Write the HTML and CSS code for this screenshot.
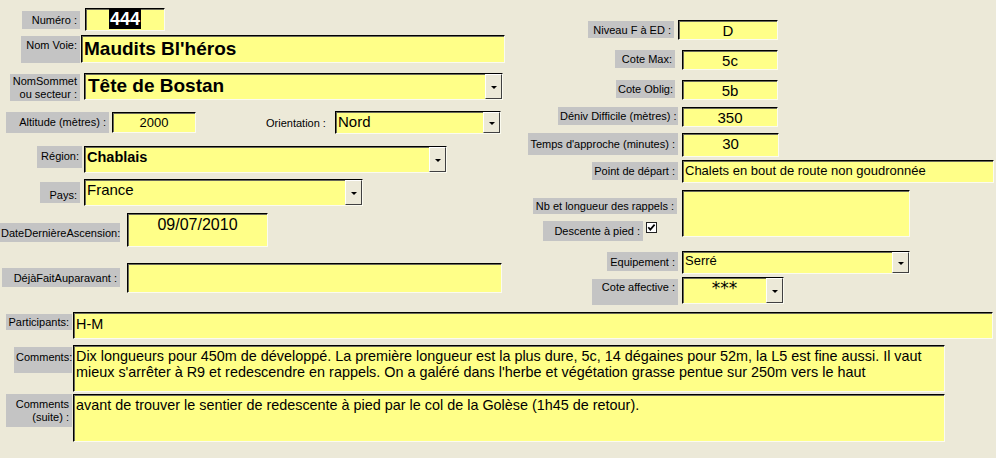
FILE: index.html
```html
<!DOCTYPE html>
<html lang="fr">
<head>
    <meta charset="UTF-8">
    <title>Voies - Formulaire</title>
    <link rel="stylesheet" href="styles.css">
</head>
<body>
    <div class="form">
        <div class="top">
            <div class="col-left">
                <div class="row r-numero">
                    <div class="lab">Numéro :</div>
                    <div class="field center"><span class="sel">444</span></div>
                </div>
                <div class="row r-voie">
                    <div class="lab">Nom Voie:</div>
                    <div class="field big">Maudits Bl'héros</div>
                </div>
                <div class="row r-sommet">
                    <div class="lab">NomSommet<br>ou secteur :</div>
                    <div class="field combo big"><span class="val">Tête de Bostan</span><span class="btn"></span></div>
                </div>
                <div class="row r-alt">
                    <div class="lab">Altitude (mètres) :</div>
                    <div class="field center">2000</div>
                    <div class="plain">Orientation :</div>
                    <div class="field combo"><span class="val">Nord</span><span class="btn"></span></div>
                </div>
                <div class="row r-region">
                    <div class="lab">Région:</div>
                    <div class="field combo"><span class="val">Chablais</span><span class="btn"></span></div>
                </div>
                <div class="row r-pays">
                    <div class="lab">Pays:</div>
                    <div class="field combo"><span class="val">France</span><span class="btn"></span></div>
                </div>
                <div class="row r-date">
                    <div class="lab">DateDernièreAscension:</div>
                    <div class="field center">09/07/2010</div>
                </div>
                <div class="row r-deja">
                    <div class="lab">DéjàFaitAuparavant :</div>
                    <div class="field"></div>
                </div>
            </div>

            <div class="col-right">
                <div class="row r-niveau">
                    <div class="rl"><div class="lab">Niveau F à ED :</div></div>
                    <div class="field center">D</div>
                </div>
                <div class="row r-max">
                    <div class="rl"><div class="lab">Cote Max:</div></div>
                    <div class="field center">5c</div>
                </div>
                <div class="row r-oblig">
                    <div class="rl"><div class="lab">Cote Oblig:</div></div>
                    <div class="field center">5b</div>
                </div>
                <div class="row r-deniv">
                    <div class="rl"><div class="lab">Déniv Difficile (mètres) :</div></div>
                    <div class="field center">350</div>
                </div>
                <div class="row r-temps">
                    <div class="rl"><div class="lab">Temps d'approche (minutes) :</div></div>
                    <div class="field center">30</div>
                </div>
                <div class="row r-depart">
                    <div class="rl"><div class="lab">Point de départ :</div></div>
                    <div class="field">Chalets en bout de route non goudronnée</div>
                </div>
                <div class="row r-rappels">
                    <div class="rl stack">
                        <div class="lab lab-nb">Nb et longueur des rappels :</div>
                        <div class="desc">
                            <div class="lab">Descente à pied :</div>
                            <svg class="chk" width="11" height="11" viewBox="0 0 11 11">
                                <rect x="0.5" y="0.5" width="10" height="10" fill="#fff" stroke="#222"/>
                                <path d="M2.3 5.2 L4.3 7.6 L8.6 2.6" fill="none" stroke="#000" stroke-width="1.7"/>
                            </svg>
                        </div>
                    </div>
                    <div class="field"></div>
                </div>
                <div class="row r-equip">
                    <div class="rl"><div class="lab">Equipement :</div></div>
                    <div class="field combo"><span class="val">Serré</span><span class="btn"></span></div>
                </div>
                <div class="row r-aff">
                    <div class="rl"><div class="lab">Cote affective :</div></div>
                    <div class="field combo"><span class="val stars">***</span><span class="btn"></span></div>
                </div>
            </div>
        </div>

        <div class="bottom">
            <div class="row r-part">
                <div class="lab">Participants:</div>
                <div class="field">H-M</div>
            </div>
            <div class="row r-comm">
                <div class="lab">Comments:</div>
                <div class="field memo">Dix longueurs pour 450m de développé. La première longueur est la plus dure, 5c, 14 dégaines pour 52m, la L5 est fine aussi. Il vaut mieux s'arrêter à R9 et redescendre en rappels. On a galéré dans l'herbe et végétation grasse pentue sur 250m vers le haut</div>
            </div>
            <div class="row r-suite">
                <div class="lab">Comments<br>(suite) :</div>
                <div class="field memo">avant de trouver le sentier de redescente à pied par le col de la Golèse (1h45 de retour).</div>
            </div>
        </div>
    </div>
</body>
</html>
```

FILE: styles.css
```css
body {
    margin: 0;
    width: 996px;
    height: 458px;
    overflow: hidden;
    background: #ece9d8;
    color: #000;
    font-family: "Liberation Sans", Arial, sans-serif;
}
.top {
    display: flex;
}
.col-left {
    width: 520px;
    padding-top: 8px;
}
.col-right {
    padding-top: 20px;
}
.row {
    display: flex;
    align-items: flex-start;
}
.lab {
    flex: none;
    box-sizing: border-box;
    background: #c4c4c4;
    font-size: 11px;
    line-height: 13px;
    text-align: right;
    white-space: nowrap;
    padding: 2px 3px 0 2px;
}
.plain {
    flex: none;
    font-size: 11px;
    line-height: 13px;
    white-space: nowrap;
}
.field {
    flex: none;
    box-sizing: border-box;
    background: #ffff88;
    border: 1px solid;
    border-color: #000 #fbfbf0 #fbfbf0 #000;
    box-shadow: inset 1px 1px 0 #6a6a5a;
    font-size: 13px;
    line-height: 15px;
    padding: 1px 2px;
    white-space: nowrap;
    overflow: hidden;
}
.center {
    text-align: center;
}
.big {
    font-size: 19px;
    font-weight: bold;
    line-height: 22px;
}
.memo {
    white-space: normal;
    font-size: 14.4px;
    line-height: 16px;
    padding-top: 2px;
}
.combo {
    display: flex;
    padding: 0;
}
.combo .val {
    flex: 1;
    padding: 1px 2px;
    overflow: hidden;
}
.combo .btn {
    flex: none;
    width: 17px;
    box-sizing: border-box;
    background: #ece9d8;
    border: 1px solid;
    border-color: #fff #404040 #404040 #fff;
    display: flex;
    align-items: center;
    justify-content: center;
}
.combo .btn::after {
    content: "";
    border-left: 3px solid transparent;
    border-right: 3px solid transparent;
    border-top: 3px solid #000;
    margin-top: 2px;
}
.sel {
    background: #000;
    color: #fff;
    font-size: 18px;
    font-weight: bold;
    line-height: 19px;
    padding: 0 1px;
}

/* colonne gauche */
.r-numero .lab { margin: 3px 0 0 22px; width: 58px; height: 18px; padding-top: 3px; }
.r-numero .field { margin-left: 5px; width: 80px; height: 23px; padding-top: 1px; }

.r-voie { margin-top: 4px; }
.r-voie .lab { margin: 1px 0 0 21px; width: 59px; height: 27px; padding-top: 3px; }
.r-voie .field { margin-left: 1px; width: 424px; height: 28px; padding-top: 2px; }

.r-sommet { margin-top: 10px; }
.r-sommet .lab { margin: 1px 0 0 10px; width: 70px; height: 27px; padding-top: 1px; }
.r-sommet .field { margin-left: 4px; width: 419px; height: 27px; }
.r-sommet .val { padding: 1px 3px; }

.r-alt { margin-top: 10px; }
.r-alt .lab { margin: 1px 0 0 6px; width: 103px; height: 21px; padding-top: 4px; }
.r-alt .center { margin: 1px 0 0 3px; width: 84px; height: 21px; padding-top: 2px; }
.r-alt .plain { margin: 6px 0 0 70px; width: 69px; }
.r-alt .combo { width: 166px; height: 23px; font-size: 15px; line-height: 17px; }

.r-region { margin-top: 12px; }
.r-region .lab { margin-left: 37px; width: 45px; height: 22px; padding-top: 4px; }
.r-region .field { margin-left: 2px; width: 363px; height: 27px; font-size: 14.5px; font-weight: bold; line-height: 17px; }
.r-region .val { padding-top: 2px; }

.r-pays { margin-top: 6px; }
.r-pays .lab { margin: 3px 0 0 40px; width: 40px; height: 21px; padding-top: 7px; }
.r-pays .field { margin-left: 4px; width: 279px; height: 27px; font-size: 15px; line-height: 17px; }

.r-date { margin-top: 7px; }
.r-date .lab { margin-top: 10px; width: 120px; height: 19px; padding: 4px 0 0 1px; }
.r-date .field { margin-left: 7px; width: 141px; height: 34px; font-size: 16px; line-height: 18px; padding-top: 2px; }

.r-deja { margin-top: 16px; }
.r-deja .lab { margin: 5px 0 0 2px; width: 118px; height: 19px; padding-top: 4px; }
.r-deja .field { margin-left: 7px; width: 375px; height: 30px; }

/* colonne droite */
.rl {
    flex: none;
    width: 158px;
    display: flex;
    justify-content: flex-end;
}
.col-right .field { margin-left: 4px; }
.col-right .center { font-size: 15px; line-height: 17px; }

.r-niveau .lab { margin: 1px 4px 0 0; width: 86px; height: 17px; padding-top: 3px; }
.r-niveau .field { margin-left: 0; width: 100px; height: 20px; }

.r-max { margin-top: 10px; }
.r-max .lab { margin-right: 3px; width: 60px; height: 18px; padding-top: 3px; }
.r-max .field { width: 96px; height: 20px; }

.r-oblig { margin-top: 10px; }
.r-oblig .lab { margin-right: 3px; width: 59px; height: 18px; padding-top: 3px; }
.r-oblig .field { width: 96px; height: 20px; }

.r-deniv { margin-top: 7px; }
.r-deniv .lab { width: 120px; height: 18px; padding-top: 3px; }
.r-deniv .field { width: 96px; height: 20px; }

.r-temps { margin-top: 6px; }
.r-temps .lab { width: 150px; height: 22px; padding-top: 5px; }
.r-temps .field { width: 97px; height: 24px; }

.r-depart { margin-top: 3px; }
.r-depart .lab { margin-top: 2px; width: 86px; height: 18px; padding-top: 3px; }
.r-depart .field { width: 312px; height: 23px; padding-top: 2px; }

.r-rappels { margin-top: 7px; }
.stack {
    flex-direction: column;
    align-items: flex-end;
}
.lab-nb { margin: 8px 1px 0 0; width: 144px; height: 16px; padding-top: 2px; }
.desc {
    display: flex;
    align-items: flex-start;
    margin: 7px 21px 0 0;
}
.desc .lab { width: 100px; height: 20px; padding-top: 4px; }
.chk { margin: 1px 0 0 3px; }
.r-rappels .field { width: 228px; height: 47px; }

.r-equip { margin-top: 10px; }
.r-equip .lab { margin-top: 1px; width: 71px; height: 19px; padding-top: 4px; }
.r-equip .field { width: 228px; height: 23px; }

.r-aff { margin-top: 3px; }
.r-aff .lab { margin-top: 2px; width: 86px; height: 26px; padding-top: 2px; }
.r-aff .field { width: 102px; height: 27px; }
.stars {
    text-align: center;
    font-family: "DejaVu Sans", sans-serif;
    font-size: 17px;
    line-height: 18px;
    padding-top: 6px;
}

/* bas du formulaire */
.bottom {
    margin-top: 7px;
}
.bottom .field { margin-left: 1px; }

.r-part .lab { margin: 2px 0 0 6px; width: 66px; height: 16px; padding-top: 2px; }
.r-part .field { width: 920px; height: 27px; padding-top: 3px; font-size: 14.4px; line-height: 16px; }

.r-comm { margin-top: 6px; }
.r-comm .lab { margin: 2px 0 0 14px; width: 58px; height: 26px; padding-top: 4px; }
.r-comm .field { width: 872px; height: 47px; }

.r-suite { margin-top: 2px; }
.r-suite .lab { margin-left: 6px; width: 66px; height: 33px; padding-top: 4px; }
.r-suite .field { width: 872px; height: 48px; }
```
